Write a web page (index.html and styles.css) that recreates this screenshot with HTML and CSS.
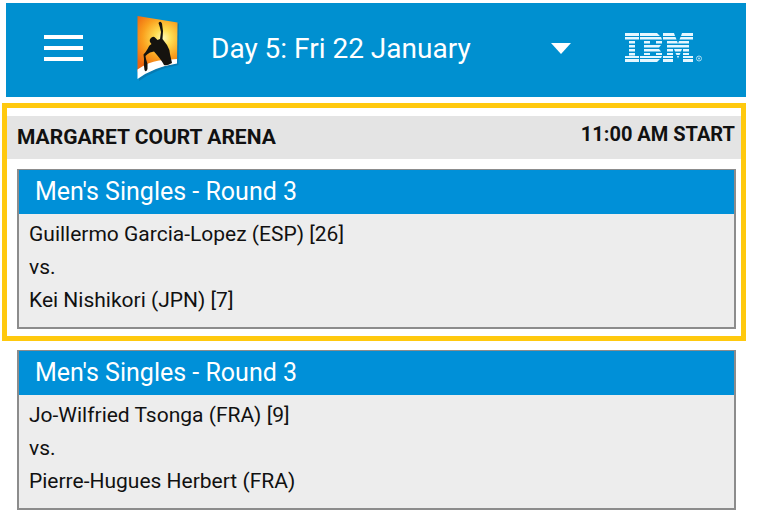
FILE: index.html
```html
<!DOCTYPE html>
<html lang="en">

<head>
    <meta charset="UTF-8">
    <meta name="viewport" content="width=device-width, initial-scale=1.0">
    <title>Schedule of Play</title>
    <link rel="stylesheet" href="styles.css">
</head>

<body>
    <header class="topbar">
        <button class="menu-button" type="button" aria-label="Menu">
            <span class="menu-line"></span>
            <span class="menu-line"></span>
            <span class="menu-line"></span>
        </button>
        <svg class="event-logo" viewBox="0 0 44 68" role="img" aria-label="Tournament logo">
            <defs>
                <radialGradient id="sun" gradientUnits="userSpaceOnUse" cx="27" cy="24" r="34">
                    <stop offset="0" stop-color="#fffbb8" />
                    <stop offset="0.25" stop-color="#ffdc50" />
                    <stop offset="0.6" stop-color="#faa01e" />
                    <stop offset="1" stop-color="#ec6410" />
                </radialGradient>
            </defs>
            <path d="M3 3L43 9.500L42.500 51Q20 55 3 67Z" fill="#0a6d9e" opacity="0.6" />
            <path d="M1.500 2L41.500 8.500L41 49L1.500 58Z" fill="url(#sun)" />
            <path d="M1.500 55.500Q12 48 23 46.500L41 45V49.500Q18 53 1.500 65Z" fill="#fff" />
            <path d="M22.500 9Q24.500 6.500 26 9.500L27 17L26.500 25L31 31Q34 36 34 40L36 49Q31 52 28 51Q26 47 21 41L18 37.500L14 38.500Q11 40 9.500 42L10 45Q12 49 11.500 55Q10 59 8.500 56Q7.500 51 8 45L7.500 40.500Q10 38 11.500 35Q13 31 15.500 30Q12.500 27 14.500 24.500Q17 21.500 19.500 24L21.500 26L24 25L25 18Q24 13 22.500 9Z" fill="#15130f" />
        </svg>
        <div class="day-picker">
            <select class="day-select" aria-label="Day">
                <option>Day 5: Fri 22 January</option>
            </select>
            <svg class="day-arrow" viewBox="0 0 20 11" aria-hidden="true">
                <path d="M0 0H20L10 11Z" fill="#fff" />
            </svg>
        </div>
        <svg class="sponsor-logo" viewBox="0 0 78 30" role="img" aria-label="IBM">
            <g fill="#e6f7ff">
                <path d="M0 0h14v3H0zM0 4h14v2.500H0zM4 8h6v2.500H4zM4 12h6v2.500H4zM4 16h6v2.500H4zM4 20h6v2.500H4zM0 23h14v2H0zM0 26h14v3H0z" />
                <path d="M15 0h17l3 3H15zM15 4h21l1 2.500H15zM19 8h6v2.500h-6zM31 8h6v2.500h-6zM19 12h17l-2 2.500H19zM19 16h15l2 2.500H19zM19 20h6v2h-6zM31 20h6v2h-6zM15 23h22l-1 2H15zM15 26h20L32 29H15z" />
                <path d="M38 0h11l1 3H38zM57 0h11v3H56zM38 4h12.500l1 2.500H38zM55.500 4H68v2.500H54.500zM42 8h10l1 2.500H42zM54 8h10v2.500H53zM42 12h22v2.500H42zM42 16h6v2.500h-6zM49 16h8l-1 2.500h-6zM58 16h6v2.500h-6zM42 20h6v2h-6zM50.500 20h5l-1 2h-3zM58 20h6v2h-6zM38 23h10v2H38zM52 23h2l-1 2.500zM58 23h10v2H58zM38 26h10v3H38zM58 26h10v3H58z" />
            </g>
            <circle cx="74" cy="25.500" r="2.500" fill="none" stroke="#a8dcf4" stroke-width="1" />
            <circle cx="74" cy="25.500" r="1" fill="#a8dcf4" />
        </svg>
    </header>

    <main class="schedule">
        <section class="court">
            <div class="court-bar">
                <h1 class="court-name">MARGARET COURT ARENA</h1>
                <span class="start-time">11:00 AM START</span>
            </div>
            <article class="match">
                <h2 class="match-title">Men's Singles - Round 3</h2>
                <div class="match-players">
                    <p>Guillermo Garcia-Lopez (ESP) [26]</p>
                    <p>vs.</p>
                    <p>Kei Nishikori (JPN) [7]</p>
                </div>
            </article>
        </section>
        <article class="match">
            <h2 class="match-title">Men's Singles - Round 3</h2>
            <div class="match-players">
                <p>Jo-Wilfried Tsonga (FRA) [9]</p>
                <p>vs.</p>
                <p>Pierre-Hugues Herbert (FRA)</p>
            </div>
        </article>
    </main>
</body>

</html>
```
FILE: styles.css
```css
* {
    box-sizing: border-box;
}

body {
    margin: 0;
    padding: 3px 23px 12px 2px;
    font-family: Roboto, sans-serif;
    background-color: white;
    color: #111;
}

h1,
h2,
p {
    margin: 0;
}

.topbar {
    display: flex;
    align-items: center;
    height: 94px;
    margin-left: 4px;
    padding: 0 43px 4px 38px;
    background-color: #0090d0;
    color: white;
}

.menu-button {
    display: flex;
    flex-direction: column;
    gap: 7px;
    width: 39px;
    padding: 0;
    border: none;
    background: none;
    cursor: pointer;
}

.menu-line {
    height: 4px;
    width: 100%;
    background-color: white;
}

.event-logo {
    width: 44px;
    height: 68px;
    margin-left: 53px;
}

.day-picker {
    display: grid;
    flex: 1;
    align-items: center;
    margin: 0 54px 0 31px;
}

.day-select,
.day-arrow {
    grid-area: 1 / 1;
}

.day-select {
    width: 100%;
    height: 40px;
    padding: 0;
    border: none;
    background: none;
    appearance: none;
    font-family: inherit;
    font-size: 28px;
    color: white;
}

.day-select option {
    color: #111;
}

.day-arrow {
    justify-self: end;
    width: 20px;
    height: 11px;
    pointer-events: none;
}

.sponsor-logo {
    width: 78px;
    height: 30px;
}

.schedule {
    margin-top: 6px;
}

.court {
    padding: 8px 0 7px;
    border: 5px solid #ffc90e;
}

.court-bar {
    display: flex;
    justify-content: space-between;
    padding: 0 6px 0 10px;
    background-color: #e4e4e4;
}

.court-name {
    font-size: 21px;
    font-weight: 700;
    line-height: 43px;
}

.start-time {
    font-size: 20px;
    font-weight: 700;
    line-height: 36px;
}

.match {
    margin: 9px 10px 0 15px;
    border: 2px solid #8c8c8c;
    border-top-width: 1px;
    background-color: #ededed;
}

.court .match {
    margin: 10px 5px 0 10px;
}

.match-title {
    padding-left: 16px;
    background-color: #0090d8;
    color: white;
    font-size: 25px;
    font-weight: 400;
    line-height: 44px;
}

.match-players {
    padding: 4px 10px 10px;
    font-size: 21px;
    line-height: 33px;
}
```
